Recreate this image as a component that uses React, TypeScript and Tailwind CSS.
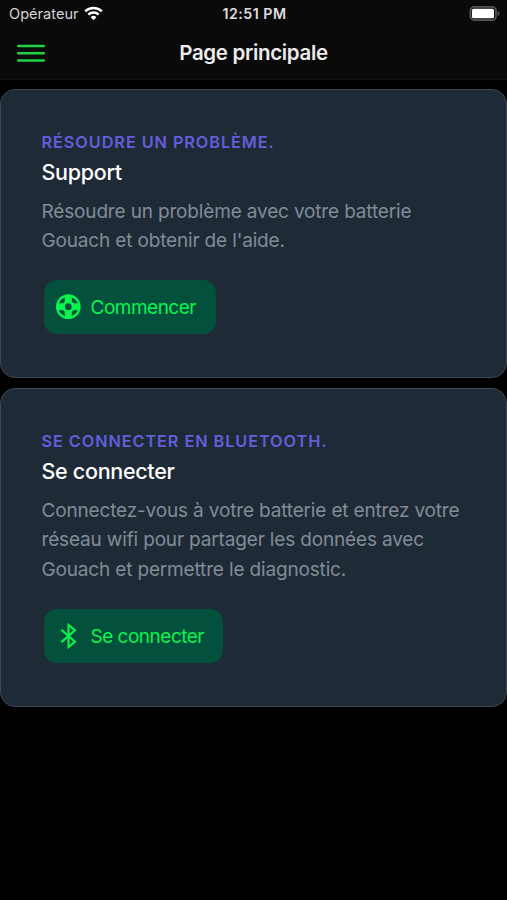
import React from "react";

export default function App() {
  return (
    <div className="h-[900px] w-[507px] overflow-hidden bg-black font-['Inter','Liberation_Sans',sans-serif]">
      <Header />
      <main className="flex flex-col gap-[10px] pt-[8.6px]">
        <ActionCard
          eyebrow="Résoudre un problème."
          title="Support"
          lines={["Résoudre un problème avec votre batterie", "Gouach et obtenir de l'aide."]}
          icon={<LifebuoyIcon />}
          action="Commencer"
          actionClass="w-[172px]"
        />
        <ActionCard
          eyebrow="Se connecter en bluetooth."
          title="Se connecter"
          lines={[
            "Connectez-vous à votre batterie et entrez votre",
            "réseau wifi pour partager les données avec",
            "Gouach et permettre le diagnostic.",
          ]}
          icon={<BluetoothIcon />}
          action="Se connecter"
          actionClass="w-[179px]"
        />
      </main>
    </div>
  );
}

function Header() {
  return (
    <header className="h-20 border-b border-[#111111] bg-[#0a0a0a]">
      {/* Status bar */}
      <div className="grid h-[27px] grid-cols-3 items-center pr-[7px] pl-[9px]">
        <div className="flex items-center gap-[5px] text-[14.6px] text-[#d6d6d6]">
          <span className="pt-[2px]">Opérateur</span>
          <WifiIcon />
        </div>
        <div className="text-center text-[14.2px] font-semibold tracking-[0.5px] whitespace-nowrap text-[#dedede]">
          12:51 PM
        </div>
        <div className="flex justify-end">
          <BatteryIcon />
        </div>
      </div>

      {/* Title bar */}
      <div className="grid h-[51px] grid-cols-[1fr_auto_1fr] items-center px-[17px]">
        <button aria-label="Menu" className="w-[28px]">
          <MenuIcon />
        </button>
        <h1 className="pt-px text-[20.5px] font-semibold tracking-[-0.33px] text-[#ececec]">Page principale</h1>
      </div>
    </header>
  );
}

function ActionCard({
  eyebrow,
  title,
  lines,
  icon,
  action,
  actionClass,
}: {
  eyebrow: string;
  title: string;
  lines: string[];
  icon: React.ReactNode;
  action: string;
  actionClass: string;
}) {
  return (
    <section className="rounded-[15px] border-[1.5px] border-[#3d4855] bg-[#1f2a37] px-[40.5px] pt-[40px] pb-[43.5px]">
      <p className="text-[16.3px] leading-[24px] font-semibold tracking-[0.92px] text-[#635fdb] uppercase">{eyebrow}</p>
      <h2 className="mt-[3px] text-[21.5px] leading-[30px] font-medium tracking-[-0.3px] text-white">{title}</h2>
      <div className="mt-[10px] text-[19px] leading-[29.3px] tracking-[-0.16px] whitespace-nowrap text-[#828b98]">
        {lines.map((line) => (
          <p key={line}>{line}</p>
        ))}
      </div>
      <button
        className={`mt-[24.5px] ml-[2px] flex h-[54px] items-center gap-[8px] rounded-[13px] bg-[#03503c] pl-[9px] text-[19px] tracking-[-0.5px] whitespace-nowrap text-[#08f54f] ${actionClass}`}
      >
        {icon}
        <span className="pt-[3px]">{action}</span>
      </button>
    </section>
  );
}

function MenuIcon() {
  return (
    <svg width="28" height="20" viewBox="0 0 28 20" stroke="#1fd143" strokeWidth="2.5" strokeLinecap="round">
      <path d="M1.2 3.1h25.6M1.2 10.3h25.6M1.2 17.5h25.6" />
    </svg>
  );
}

function WifiIcon() {
  return (
    <svg width="19" height="15" viewBox="0 0 19 15" fill="none" stroke="#ffffff" strokeWidth="2.4">
      <path d="M1.2 5.4a11.8 11.8 0 0 1 16.6 0" />
      <path d="M4.3 8.6a7.4 7.4 0 0 1 10.4 0" />
      <path d="M9.5 14.2 6.6 11.3a4.1 4.1 0 0 1 5.8 0z" fill="#ffffff" stroke="none" />
    </svg>
  );
}

function BatteryIcon() {
  return (
    <svg width="31" height="15" viewBox="0 0 31 15">
      <rect x="1.4" y="0.9" width="25.6" height="13.2" rx="3.8" fill="none" stroke="#565656" strokeWidth="1.8" />
      <rect x="3" y="2.7" width="22" height="9.6" rx="1.6" fill="#ffffff" />
      <path d="M28.6 5.1c1.3.5 2 1.3 2 2.4s-.7 1.9-2 2.4z" fill="#565656" />
    </svg>
  );
}

function LifebuoyIcon() {
  return (
    <svg width="30" height="30" viewBox="0 0 30 30" fill="none" stroke="currentColor">
      <circle cx="15.3" cy="14.7" r="11.2" strokeWidth="2.3" />
      <circle cx="15.3" cy="14.7" r="4.8" strokeWidth="2.8" />
      <path d="M15.3 3.5v7.6M15.3 18.3v7.6M4.1 14.7h7.6M18.9 14.7h7.6" strokeWidth="7" />
    </svg>
  );
}

function BluetoothIcon() {
  return (
    <svg width="30" height="30" viewBox="0 0 30 30" fill="none" stroke="currentColor" strokeWidth="2.1">
      <path d="M8.4 8.7 21.9 20.7l-6.4 5.4V3.9l6.4 5.4L8.4 21.1" />
    </svg>
  );
}
